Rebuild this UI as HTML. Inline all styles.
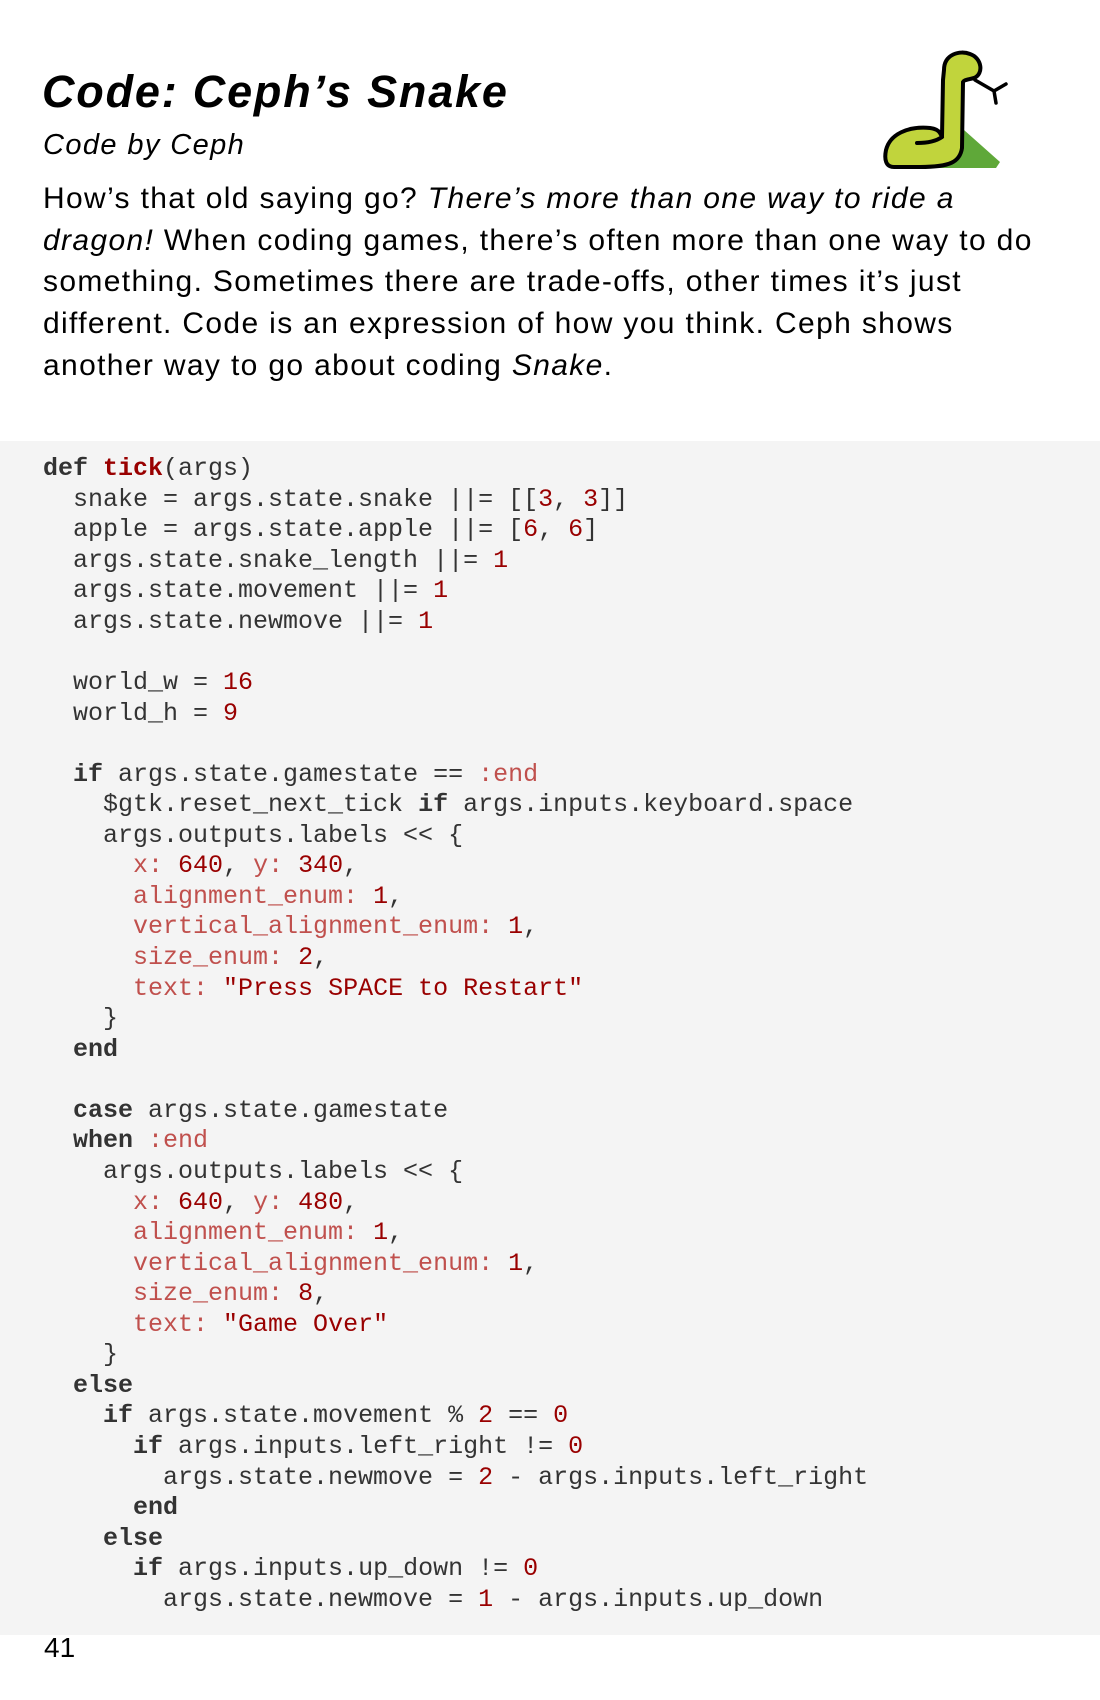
<!DOCTYPE html>
<html><head><meta charset="utf-8"><style>
body{margin:0;width:1100px;height:1700px;background:#fff;position:relative;overflow:hidden;font-family:"Liberation Sans",sans-serif;color:#000}
.t{position:absolute;left:43px;white-space:nowrap}
h1{position:absolute;left:42px;top:64px;margin:0;font-size:45px;font-style:italic;font-weight:bold;line-height:56px;letter-spacing:1.8px}
.sub{top:128px;font-size:29px;font-style:italic;line-height:34px;letter-spacing:1.4px}
.p{top:178px;font-size:30px;line-height:41.7px;letter-spacing:1.35px}
.code{position:absolute;left:0;top:441px;width:1100px;height:1194px;background:#f4f4f4}
pre{position:absolute;left:43px;top:454px;margin:0;font-family:"Liberation Mono",monospace;font-size:25px;line-height:30.57px;color:#333}
b{color:#333}
.f{color:#990000;font-weight:bold}
.n{color:#990000}
.s{color:#c0504d}
.str{color:#990000}
.pg{position:absolute;left:44px;top:1632px;font-size:28px}
</style></head><body>
<h1>Code: Ceph’s Snake</h1>
<div class="t sub">Code by Ceph</div>
<div class="t p">How’s that old saying go? <i>There’s more than one way to ride a</i><br><i>dragon!</i> When coding games, there’s often more than one way to do<br>something. Sometimes there are trade-offs, other times it’s just<br>different. Code is an expression of how you think. Ceph shows<br>another way to go about coding <i>Snake</i>.</div>
<svg style="position:absolute;left:860px;top:40px" width="160" height="140" viewBox="0 0 160 140">
<path d="M62 92 L104 90 L140 122 L136 128 L70 128 Z" fill="#5fa839"/>
<path d="M115 40 L134 51 M134 51 L146 44 M134 51 L136 63" stroke="#000" stroke-width="3.5" fill="none" stroke-linecap="round"/>
<path d="M84 30 C84 14 100 10 110 14 C122 18 124 34 114 38 C106 40 104 40 103 42 L102 108 C100 122 90 127 60 127 L34 127 C26 127 24 120 26 110 C30 94 48 86 70 88 C78 89 80 92 82 97 L83 40 Z" fill="#c1d43c" stroke="#000" stroke-width="4" stroke-linejoin="round"/>
<path d="M82 97 C75 102 65 103 57 103" stroke="#000" stroke-width="4" fill="none" stroke-linecap="round"/>
</svg>
<div class="code"></div>
<pre><b>def</b> <span class="f">tick</span>(args)
  snake = args.state.snake ||= [[<span class="n">3</span>, <span class="n">3</span>]]
  apple = args.state.apple ||= [<span class="n">6</span>, <span class="n">6</span>]
  args.state.snake_length ||= <span class="n">1</span>
  args.state.movement ||= <span class="n">1</span>
  args.state.newmove ||= <span class="n">1</span>

  world_w = <span class="n">16</span>
  world_h = <span class="n">9</span>

  <b>if</b> args.state.gamestate == <span class="s">:end</span>
    $gtk.reset_next_tick <b>if</b> args.inputs.keyboard.space
    args.outputs.labels &lt;&lt; {
      <span class="s">x:</span> <span class="n">640</span>, <span class="s">y:</span> <span class="n">340</span>,
      <span class="s">alignment_enum:</span> <span class="n">1</span>,
      <span class="s">vertical_alignment_enum:</span> <span class="n">1</span>,
      <span class="s">size_enum:</span> <span class="n">2</span>,
      <span class="s">text:</span> <span class="str">"Press SPACE to Restart"</span>
    }
  <b>end</b>

  <b>case</b> args.state.gamestate
  <b>when</b> <span class="s">:end</span>
    args.outputs.labels &lt;&lt; {
      <span class="s">x:</span> <span class="n">640</span>, <span class="s">y:</span> <span class="n">480</span>,
      <span class="s">alignment_enum:</span> <span class="n">1</span>,
      <span class="s">vertical_alignment_enum:</span> <span class="n">1</span>,
      <span class="s">size_enum:</span> <span class="n">8</span>,
      <span class="s">text:</span> <span class="str">"Game Over"</span>
    }
  <b>else</b>
    <b>if</b> args.state.movement % <span class="n">2</span> == <span class="n">0</span>
      <b>if</b> args.inputs.left_right != <span class="n">0</span>
        args.state.newmove = <span class="n">2</span> - args.inputs.left_right
      <b>end</b>
    <b>else</b>
      <b>if</b> args.inputs.up_down != <span class="n">0</span>
        args.state.newmove = <span class="n">1</span> - args.inputs.up_down</pre>
<div class="pg">41</div>
</body></html>
